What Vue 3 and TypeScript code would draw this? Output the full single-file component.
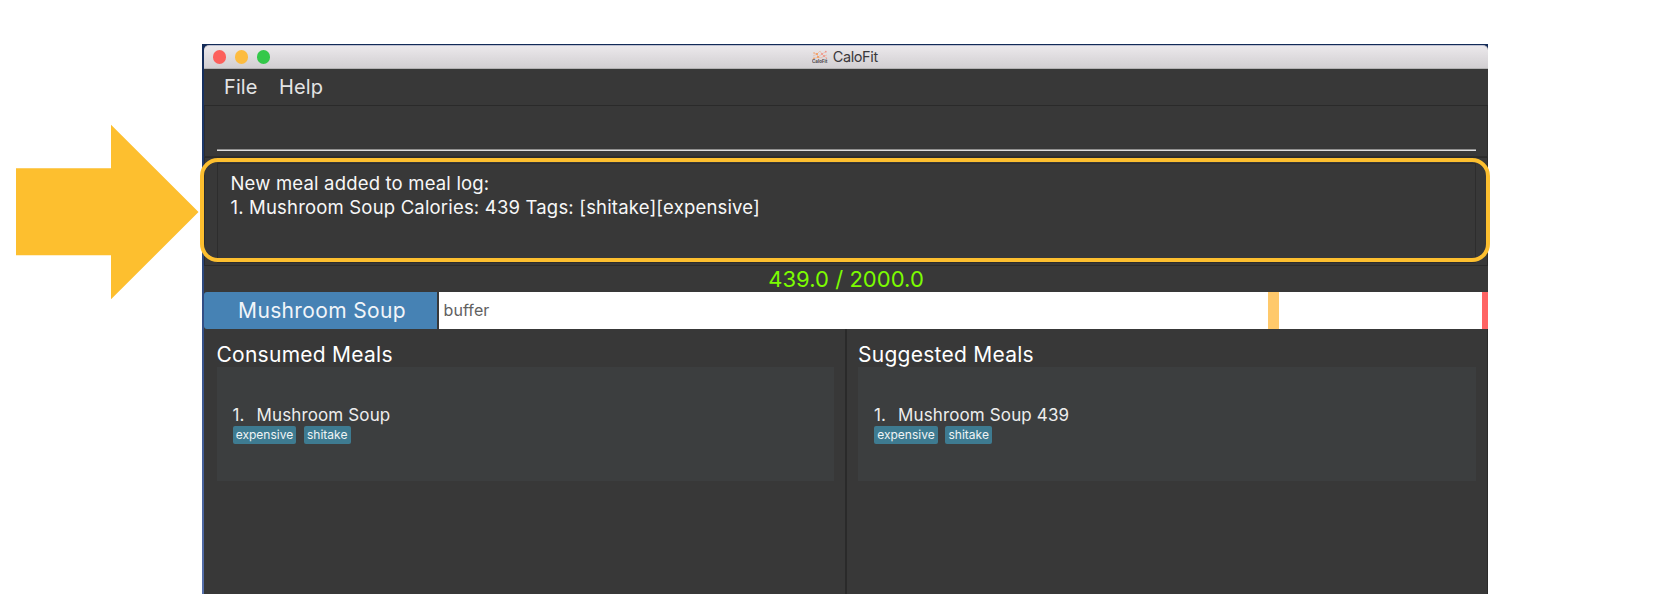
<script setup lang="ts">
interface Meal {
  name: string
  tags: string[]
}
interface Panel {
  title: string
  meals: Meal[]
}

const resultLines: string[] = [
  'New meal added to meal log:',
  '1. Mushroom Soup Calories: 439 Tags: [shitake][expensive]',
]
const panels: Panel[] = [
  { title: 'Consumed Meals', meals: [{ name: 'Mushroom Soup', tags: ['expensive', 'shitake'] }] },
  { title: 'Suggested Meals', meals: [{ name: 'Mushroom Soup 439', tags: ['expensive', 'shitake'] }] },
]
</script>

<template>
  <main class="stage">
    <svg class="arrow" width="200" height="180" viewBox="0 0 200 180" aria-hidden="true">
      <path d="M16 43.300H111V-0.300L198.500 87L111 174.300V130.300H16Z" fill="#fdbf2f" />
    </svg>

    <section class="desktop">
      <div class="window">
        <header class="titlebar">
          <div class="lights">
            <i class="light red"></i>
            <i class="light amber"></i>
            <i class="light green"></i>
          </div>
          <div class="title">
            <svg class="logo" width="16" height="14" viewBox="0 0 16 14" aria-hidden="true">
              <g fill="none" stroke="#f2a37c" stroke-width="0.6" opacity="0.8">
                <path d="M2 3L5 4L8 1L10 4L14 1.500M1 6L5 4L6 7L10 4L12 6L15 5M2 8.500L6 7L9 8L12 6L15 8.500" />
              </g>
              <g fill="#f59a56">
                <circle cx="5" cy="4" r="1" />
                <circle cx="6" cy="7" r="1" />
                <circle cx="2" cy="8.300" r="0.9" />
                <circle cx="2" cy="3" r="0.7" />
              </g>
              <g fill="#f0958a">
                <circle cx="10" cy="4" r="1" />
                <circle cx="12" cy="6" r="1" />
                <circle cx="13.800" cy="1.700" r="0.9" />
                <circle cx="14.500" cy="8.300" r="0.7" />
              </g>
              <text x="0" y="13" class="logo-text" textLength="15.500" lengthAdjust="spacingAndGlyphs">CaloFit</text>
            </svg>
            <span>CaloFit</span>
          </div>
        </header>

        <nav class="menu">
          <span>File</span>
          <span>Help</span>
        </nav>

        <div class="command"><div class="command-line"></div></div>

        <div class="result">
          <div class="result-box">
            <p v-for="line in resultLines" :key="line">{{ line }}</p>
          </div>
          <div class="highlight"></div>
        </div>

        <div class="budget">439.0 / 2000.0</div>

        <div class="bar">
          <div class="segment">Mushroom Soup</div>
          <div class="rest">
            <span class="buffer">buffer</span>
            <i class="mark"></i>
            <i class="limit"></i>
          </div>
        </div>

        <div class="panels">
          <section v-for="panel in panels" :key="panel.title" class="panel">
            <h2>{{ panel.title }}</h2>
            <div v-for="(meal, i) in panel.meals" :key="meal.name" class="card">
              <div class="meal"><span class="num">{{ i + 1 }}.</span><span>{{ meal.name }}</span></div>
              <div class="tags">
                <span v-for="tag in meal.tags" :key="tag" class="tag">{{ tag }}</span>
              </div>
            </div>
          </section>
        </div>
      </div>
    </section>
  </main>
</template>

<style>
body {
  background: #fff;
  overflow: hidden;
}
</style>

<style scoped>
.stage {
  width: 1668px;
  height: 594px;
  overflow: hidden;
  display: flex;
  align-items: flex-start;
  font-family: Inter, "Liberation Sans", sans-serif;
  background: #fff;
}
.stage * {
  box-sizing: border-box;
}
.arrow {
  flex: none;
  margin-top: 125px;
  overflow: visible;
}
.desktop {
  flex: none;
  width: 1286px;
  height: 550px;
  margin: 44px 0 0 2px;
  padding: 1px 0 0 2px;
  background: linear-gradient(#122a57, #1e3a6d 20%, #3a568f 60%, #5670ab);
}
.window {
  height: 549px;
  background: #383838;
  border-radius: 5px 5px 0 0;
  display: flex;
  flex-direction: column;
}
.titlebar {
  height: 24px;
  flex: none;
  display: grid;
  grid-template-columns: 1fr auto 1fr;
  align-items: center;
  background: linear-gradient(#ebe8eb, #d2cfd2);
  border-top: 1px solid #bdbfd0;
  border-bottom: 1px solid #b2b1b2;
  border-radius: 5px 5px 0 0;
}
.lights {
  display: flex;
  gap: 8.500px;
  padding-left: 9px;
}
.light {
  width: 13.300px;
  height: 13.300px;
  border-radius: 50%;
}
.red { background: #fc605c; }
.amber { background: #fdbc40; }
.green { background: #34c84a; }
.title {
  display: flex;
  align-items: center;
  gap: 5px;
  margin-right: 2.500px;
  font-size: 14.500px;
  line-height: 20px;
  letter-spacing: -0.400px;
  color: #3a383b;
}
.logo-text {
  font: 700 4.500px Inter, sans-serif;
  letter-spacing: 0;
  fill: #4a4548;
}
.menu {
  height: 37px;
  flex: none;
  display: flex;
  gap: 21.500px;
  padding-left: 20px;
  line-height: 36px;
  font-size: 20px;
  letter-spacing: 0.100px;
  color: #e4e4e4;
  border-bottom: 1px solid #2a2a2a;
}
.command {
  height: 51px;
  flex: none;
  padding: 43px 11px 0 12px;
  border: solid #2d2d2d;
  border-width: 0 1px 1px 1px;
}
.command-line {
  height: 2px;
  background: linear-gradient(#8f8f8f 50%, #dedede 50%);
}
.result {
  position: relative;
  height: 109px;
  flex: none;
  padding: 5px 11px 2px 12px;
  border: solid #2b2b2b;
  border-width: 1px;
}
.result-box {
  height: 100%;
  padding: 6.500px 0 0 12.500px;
  border: 1px solid #2d2d2d;
  font-size: 18.500px;
  line-height: 24px;
  letter-spacing: 0.180px;
  color: #f7f7f7;
}
.result-box p {
  margin: 0;
}
.highlight {
  position: absolute;
  left: -5px;
  right: -3px;
  top: 0;
  height: 104px;
  border: 4px solid #fdbf2f;
  border-radius: 18px;
}
.budget {
  height: 26px;
  flex: none;
  text-align: center;
  font-size: 22px;
  line-height: 26px;
  letter-spacing: 0.050px;
  color: #7cfc00;
}
.bar {
  height: 37px;
  flex: none;
  display: flex;
  gap: 2px;
}
.segment {
  width: 233px;
  flex: none;
  padding-left: 3px;
  border-radius: 3px 0 0 3px;
  background: #4682b4;
  color: #f1f5f9;
  font-size: 21px;
  line-height: 37px;
  letter-spacing: 0.350px;
  text-align: center;
}
.rest {
  flex: 1;
  display: flex;
  background: #fff;
}
.buffer {
  width: 829px;
  padding-left: 4.500px;
  font-size: 16px;
  line-height: 36px;
  letter-spacing: 0.100px;
  color: #616161;
}
.mark {
  width: 11px;
  background: #ffc96b;
}
.limit {
  width: 6px;
  margin-left: auto;
  background: #ff6464;
}
.panels {
  flex: 1;
  display: grid;
  grid-template-columns: 643px 641px;
}
.panel {
  padding: 13px 11px 0 12.500px;
  border-right: 2px solid #2a2a2a;
}
.panel + .panel {
  padding-left: 11px;
  border-right-width: 1px;
}
h2 {
  margin: 0;
  height: 25px;
  font-size: 21px;
  font-weight: 400;
  line-height: 26px;
  letter-spacing: 0.260px;
  color: #fff;
}
.card {
  height: 114px;
  padding: 38px 0 0 16px;
  background: #3c3e3f;
}
.meal {
  display: flex;
  font-size: 17px;
  line-height: 21px;
  letter-spacing: 0.130px;
  color: #ededed;
}
.num {
  width: 24px;
}
.tags {
  display: flex;
  gap: 7.500px;
}
.tag {
  height: 18px;
  padding: 0 3.200px;
  border-radius: 2px;
  background: #3e7b91;
  color: #f0f4f5;
  font-size: 12px;
  line-height: 17px;
  letter-spacing: 0;
}
</style>
